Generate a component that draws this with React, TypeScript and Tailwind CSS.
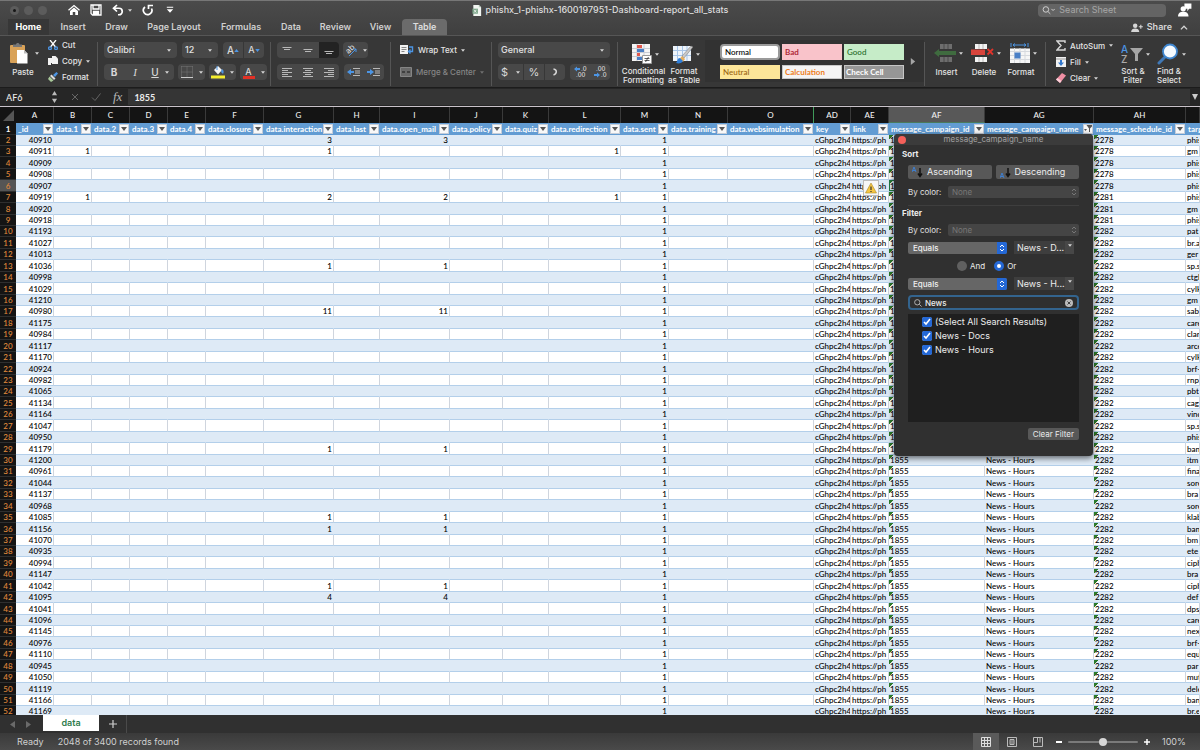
import { useState } from "react";
import type { ReactNode } from "react";

type Column = { letter: string; name: string; width: string; align?: "left" };

const columns: Column[] = [
  { letter: "A", name: "_id", width: "w-[38px]" },
  { letter: "B", name: "data.1", width: "w-[38px]" },
  { letter: "C", name: "data.2", width: "w-[38px]" },
  { letter: "D", name: "data.3", width: "w-[38px]" },
  { letter: "E", name: "data.4", width: "w-[38px]" },
  { letter: "F", name: "data.closure", width: "w-[58px]" },
  { letter: "G", name: "data.interaction", width: "w-[70px]" },
  { letter: "H", name: "data.last", width: "w-[46px]" },
  { letter: "I", name: "data.open_mail", width: "w-[70px]" },
  { letter: "J", name: "data.policy", width: "w-[53px]" },
  { letter: "K", name: "data.quiz", width: "w-[46px]" },
  { letter: "L", name: "data.redirection", width: "w-[72px]" },
  { letter: "M", name: "data.sent", width: "w-[48px]" },
  { letter: "N", name: "data.training", width: "w-[59px]" },
  { letter: "O", name: "data.websimulation", width: "w-[86px]" },
  { letter: "AD", name: "key", width: "w-[37px]", align: "left" },
  { letter: "AE", name: "link", width: "w-[38px]", align: "left" },
  { letter: "AF", name: "message_campaign_id", width: "w-[96px]", align: "left" },
  { letter: "AG", name: "message_campaign_name", width: "w-[109px]", align: "left" },
  { letter: "AH", name: "message_schedule_id", width: "w-[92px]", align: "left" },
  { letter: "", name: "target", width: "", align: "left" },
];

const ids =
  "40910 40911 40909 40908 40907 40919 40920 40918 41193 41027 41013 41036 40998 41029 41210 40980 41175 40984 41117 41170 40924 40982 41065 41134 41164 41047 40950 41179 41200 40961 41044 41137 40968 41085 41156 41070 40935 40994 41147 41042 41095 41041 41096 41145 40976 41110 40945 41050 41119 41166 41169".split(
    " ",
  );

const targets =
  "phis gm phis phis phis phis gm phis pat br.a ger sp.s ctgl cylk gm sab care clar arce cylk brf- rnp pbt cag vinc sp.s phis ban itm fina sore bra sore klab ban bm ete ciph bra ciph def dps care nex brf- equ par mut dele ban br.e".split(
    " ",
  );

const counts: Record<number, Record<string, number>> = {
  2: { G: 3, I: 3 },
  3: { B: 1, G: 1, L: 1 },
  7: { B: 1, G: 2, I: 2, L: 1 },
  13: { G: 1, I: 1 },
  17: { G: 11, I: 11 },
  29: { G: 1, I: 1 },
  35: { G: 1, I: 1 },
  36: { G: 1, I: 1 },
  41: { G: 1, I: 1 },
  42: { G: 4, I: 4 },
};

function cellValue(row: number, letter: string): string | number {
  if (letter === "A") return ids[row - 2];
  if (letter === "M") return 1;
  if (letter === "AD") return "cGhpc2h4I";
  if (letter === "AE") return "https://ph";
  if (letter === "AF") return "1855";
  if (letter === "AG") return "News - Hours";
  if (letter === "AH") return row < 7 ? "2278" : row < 10 ? "2281" : "2282";
  if (letter === "") return targets[row - 2];
  return counts[row]?.[letter] ?? "";
}

function Caret({ className = "text-[#d4d4d4]" }: { className?: string }) {
  return (
    <svg viewBox="0 0 6 4" aria-hidden="true" className={`h-[3px] w-1 shrink-0 ${className}`}>
      <path d="M0 0h6L3 4z" fill="currentColor" />
    </svg>
  );
}

function Divider() {
  return <div className="mt-0.5 h-[44px] w-px shrink-0 bg-[#555]" />;
}

function UpDown() {
  return (
    <svg viewBox="0 0 8 12" aria-hidden="true" className="h-2 w-1.5" fill="none" stroke="currentColor" strokeWidth="1.5">
      <path d="M1 4.5 4 1.5l3 3M1 7.5l3 3 3-3" />
    </svg>
  );
}

function TitleBar() {
  return (
    <div className="flex h-[19px] items-center border-t border-[#777] pr-2 pl-2.5">
      <div className="flex w-[58px] gap-[5px]">
        <span className="grid size-[9px] place-items-center rounded-full bg-[#5c5c5c]">
          <span className="size-[3px] rounded-full bg-[#161616]" />
        </span>
        <span className="size-[9px] rounded-full bg-[#5c5c5c]" />
        <span className="size-[9px] rounded-full bg-[#5c5c5c]" />
      </div>
      <div className="flex items-center text-white">
        <button type="button" aria-label="Home" className="mr-2.5">
          <svg viewBox="0 0 24 24" className="size-3" fill="none" stroke="currentColor" strokeWidth="2.6">
            <path d="M1 12.500 12 3l11 9.500" />
            <path d="M4 14v8h5.500v-6h5v6H20v-8l-8-7z" fill="currentColor" stroke="none" />
          </svg>
        </button>
        <button type="button" aria-label="Save" className="mr-2.5">
          <svg viewBox="0 0 24 24" className="size-3" fill="none" stroke="currentColor" strokeWidth="2.6">
            <path d="M2 2h20v20H5l-3-3z" />
            <path d="M6 2v8h12V2" />
            <path d="M7 22v-7h10v7" fill="currentColor" />
          </svg>
        </button>
        <button type="button" aria-label="Undo" className="mr-2.5 flex items-center gap-1">
          <svg viewBox="0 0 24 24" className="size-3" fill="none" stroke="currentColor" strokeWidth="3.4">
            <path d="M10 2 3 8.500 10 15M3 8.500h11a6.500 6.500 0 0 1 0 13h-2" />
          </svg>
          <Caret />
        </button>
        <button type="button" aria-label="Redo" className="mr-3">
          <svg viewBox="0 0 24 24" className="size-3" fill="none" stroke="currentColor" strokeWidth="3.4">
            <path d="M6 6a8.500 8.500 0 1 0 13 3M13 10V3h9" />
          </svg>
        </button>
        <button type="button" aria-label="Customize toolbar">
          <svg viewBox="0 0 10 10" className="size-2" fill="currentColor">
            <path d="M1 1h8v1.200H1zM1 4h8L5 8.500z" />
          </svg>
        </button>
      </div>
      <div className="flex flex-1 items-center justify-center gap-1 pr-3 text-[9px] font-medium text-[#dcdcdc]">
        <svg viewBox="0 0 20 24" aria-hidden="true" className="h-[11px] w-2.5">
          <path d="M2 0h12l5 5v19H2z" fill="#f1f5f1" />
          <path d="M14 0v5h5z" fill="#b7cdbd" />
          <path d="M0 8h12v11H0z" fill="#7da68a" />
          <path d="m3.500 10.500 5 6m0-6-5 6" stroke="#fff" strokeWidth="1.600" />
        </svg>
        <h1>phishx_1-phishx-1600197951-Dashboard-report_all_stats</h1>
      </div>
      <label className="flex h-[13px] w-32 items-center rounded-sm bg-[#646464] px-1 text-[#cfcfcf]">
        <svg viewBox="0 0 24 16" aria-hidden="true" className="h-2.5 w-[15px]" fill="none" stroke="currentColor" strokeWidth="1.800">
          <circle cx="7" cy="7" r="5" />
          <path d="m11 11 4 4M17 6l3 3 3-3" />
        </svg>
        <input
          type="search"
          aria-label="Search Sheet"
          placeholder="Search Sheet"
          className="w-full min-w-0 bg-transparent pl-1 text-[9px] outline-none placeholder:text-[#a6a6a6]"
        />
      </label>
      <button type="button" aria-label="Account" className="ml-3 text-white">
        <svg viewBox="0 0 24 24" className="size-3.5" fill="currentColor">
          <path d="M11 1h12v9h-4l-3 4v-4h-5z" />
          <circle cx="9" cy="10" r="4.500" />
          <path d="M0 23c0-6 4-8 9-8s9 2 9 8z" />
        </svg>
      </button>
    </div>
  );
}

const tabs = [
  { name: "Home", width: "w-[41px]" },
  { name: "Insert", width: "w-[48px]" },
  { name: "Draw", width: "w-[39px]" },
  { name: "Page Layout", width: "w-[76px]" },
  { name: "Formulas", width: "w-[58px]" },
  { name: "Data", width: "w-[42px]" },
  { name: "Review", width: "w-[47px]" },
  { name: "View", width: "w-[43px]" },
  { name: "Table", width: "w-[45px]" },
];

function RibbonTabs() {
  const [active, setActive] = useState("Home");
  return (
    <div className="flex h-[17px] items-stretch border-b border-[#565656] pr-3 pl-2">
      {tabs.map((tab) => (
        <button
          key={tab.name}
          type="button"
          onClick={() => setActive(tab.name)}
          className={`${tab.width} text-center text-[9px] leading-4 whitespace-nowrap ${
            tab.name === active
              ? "bg-[#373737] font-bold text-white"
              : tab.name === "Table"
                ? "rounded-t-sm bg-[#6b6b6b] font-semibold text-[#dedede]"
                : "font-semibold text-[#cfcfcf]"
          }`}
        >
          {tab.name}
        </button>
      ))}
      <button type="button" className="ml-auto flex items-center gap-1 text-[9px] font-semibold text-[#d6d6d6]">
        <svg viewBox="0 0 26 20" aria-hidden="true" className="h-[9px] w-3" fill="currentColor">
          <circle cx="9" cy="6" r="5" />
          <path d="M0 20c0-6 4-8 9-8s9 2 9 8zM17 7h9v2.500h-9zM20.200 4h2.500v9h-2.500z" />
        </svg>
        Share
      </button>
      <button type="button" aria-label="Collapse ribbon" className="ml-2 text-[#d6d6d6]">
        <svg viewBox="0 0 12 8" className="h-[5px] w-2" fill="none" stroke="currentColor" strokeWidth="2">
          <path d="m1 7 5-5 5 5" />
        </svg>
      </button>
    </div>
  );
}

const tool = "flex h-4 items-center justify-center bg-[#484848] text-[#d8d8d8]";

function Lines({ rows }: { rows: string }) {
  return (
    <svg viewBox="0 0 12 12" aria-hidden="true" className="size-3" fill="none" stroke="#b8b8b8">
      <path d={rows} />
    </svg>
  );
}

function DropField({ label, value, width }: { label: string; value: string; width: string }) {
  return (
    <div className={`flex h-4 items-center rounded-sm bg-[#484848] pr-1.5 ${width}`}>
      <select aria-label={label} className="min-w-0 flex-1 appearance-none bg-transparent pl-[3px] text-[9px] text-[#e2e2e2]">
        <option>{value}</option>
      </select>
      <Caret />
    </div>
  );
}

function BigButton({ label, width, children }: { label: ReactNode; width: string; children: ReactNode }) {
  return (
    <button type="button" className={`flex flex-col items-center text-[8px] leading-[9px] font-medium text-[#e4e4e4] ${width}`}>
      <span className="flex h-[26px] items-center gap-[3px] pl-1">
        {children}
        <Caret />
      </span>
      <span className="whitespace-nowrap">{label}</span>
    </button>
  );
}

function Indent({ dir }: { dir: string }) {
  return (
    <svg viewBox="0 0 14 12" aria-hidden="true" className="h-3 w-3.5" fill="none">
      <path d="M6 2.500h7M8 5h5M8 7h5M6 9.500h7" stroke="#b8b8b8" />
      <path d={dir} fill="#4c95e4" />
    </svg>
  );
}

function Ribbon() {
  return (
    <div className="flex h-[51px] items-start bg-[#373737] pt-1 whitespace-nowrap text-[8px] font-medium text-[#e4e4e4]">
      <button type="button" className="ml-2 flex w-[38px] flex-col items-start text-[8px] leading-[9px]">
        <span className="flex h-[26px] items-center gap-[7px] pl-0.5">
          <svg viewBox="0 0 18 22" aria-hidden="true" className="h-[22px] w-[18px]">
            <rect x="0" y="3" width="15" height="18" rx="1" fill="#d9a258" />
            <path d="M3 5V2.500h3C6 .5 9.500.5 9.500 2.500h2.500V5z" fill="#777" />
            <path d="M7 8h7l3.500 3.500V21.500H7z" fill="#fff" />
            <path d="M14 8v3.500h3.500z" fill="#bbb" />
          </svg>
          <Caret />
        </span>
        <span className="mt-0.5 w-[30px] text-center">Paste</span>
      </button>
      <div className="flex w-[51px] flex-col gap-[6px] pl-0.5 leading-[10px]">
        <button type="button" className="flex items-center gap-1">
          <svg viewBox="0 0 10 10" aria-hidden="true" className="size-2.5" fill="none" strokeWidth="1.300">
            <path d="M2 0 7.500 7M8 0 2.500 7" stroke="#fff" />
            <circle cx="2" cy="8.200" r="1.400" stroke="#4c95e4" />
            <circle cx="8" cy="8.200" r="1.400" stroke="#4c95e4" />
          </svg>
          Cut
        </button>
        <button type="button" className="flex items-center gap-1">
          <svg viewBox="0 0 10 10" aria-hidden="true" className="size-2.5" fill="#f2f2f2">
            <path d="M0 2h4v5H3v2H0z" />
            <path d="M4 0h3.500L10 2.500V8H4z" />
          </svg>
          Copy
          <Caret />
        </button>
        <button type="button" className="flex items-center gap-1">
          <svg viewBox="0 0 10 10" aria-hidden="true" className="size-2.5">
            <path d="m5 3 3.500-3L10 1.500 7 5z" fill="#4c95e4" />
            <path d="m3.500 2.500 4 4-1.500 1.500-4-4z" fill="#ddd" />
            <path d="m1.500 4.500 4 4L3 10 0 7z" fill="#a9c99a" />
          </svg>
          Format
        </button>
      </div>
      <Divider />

      <div className="ml-1.5 flex w-[166px] flex-col gap-[6px] pt-0.5">
        <div className="flex gap-[5px]">
          <DropField label="Font" value="Calibri" width="w-[73px]" />
          <DropField label="Font size" value="12" width="w-9" />
          <div className="flex gap-px">
            <button type="button" className={`${tool} w-5 rounded-l-sm text-[10px]`}>
              A
              <svg viewBox="0 0 6 4" aria-hidden="true" className="h-[3px] w-[5px]">
                <path d="M0 4h6L3 0z" fill="#4c95e4" />
              </svg>
            </button>
            <button type="button" className={`${tool} w-5 rounded-r-sm text-[9px]`}>
              A
              <svg viewBox="0 0 6 4" aria-hidden="true" className="h-[3px] w-[5px]">
                <path d="M0 0h6L3 4z" fill="#4c95e4" />
              </svg>
            </button>
          </div>
        </div>
        <div className="flex gap-1">
          <div className="flex rounded-sm">
            <button type="button" className={`${tool} w-5 rounded-l-sm text-[10px] font-bold`}>B</button>
            <button type="button" className={`${tool} w-[22px] font-['Liberation_Serif'] text-[11px] italic`}>I</button>
            <button type="button" className={`${tool} w-7 gap-1.5 rounded-r-sm text-[10px]`}>
              <span className="underline">U</span>
              <Caret />
            </button>
          </div>
          <button type="button" aria-label="Borders" className={`${tool} w-[27px] gap-1.5 rounded-sm`}>
            <svg viewBox="0 0 12 12" aria-hidden="true" className="size-3" fill="none">
              <path d="M.5.500v11M11.500.500v11M.5.500h11M.5 6h11M6 .5v11" stroke="#777" strokeDasharray="1 1" />
              <path d="M0 11.500h12" stroke="#ccc" />
            </svg>
            <Caret />
          </button>
          <button type="button" aria-label="Fill color" className={`${tool} w-[27px] gap-[5px] rounded-sm`}>
            <svg viewBox="0 0 14 14" aria-hidden="true" className="size-3.5">
              <path d="m3 5 4-4 4 4-4 4.500z" fill="#f4f4f4" />
              <path d="M11 4c2 1 2 3 1 5l-2-2z" fill="#4c95e4" />
              <path d="M6 1v4" stroke="#4c95e4" />
              <path d="M0 10.500h14v3H0z" fill="#f7ef2e" />
            </svg>
            <Caret />
          </button>
          <button type="button" aria-label="Font color" className={`${tool} w-[27px] gap-1.5 rounded-sm`}>
            <span className="flex flex-col items-center">
              <span className="h-2.5 text-[9px] leading-[11px]">A</span>
              <span className="h-[3px] w-3 bg-[#e23126]" />
            </span>
            <Caret />
          </button>
        </div>
      </div>
      <Divider />

      <div className="ml-1.5 flex w-[113px] flex-col gap-[6px] pt-0.5">
        <div className="flex gap-1">
          <div className="flex">
            <button type="button" aria-label="Align top" className={`${tool} w-5 rounded-l-sm`}>
              <Lines rows="M1.500 3.500h9M3 5.500h6" />
            </button>
            <button type="button" aria-label="Align middle" className={`${tool} w-[22px]`}>
              <Lines rows="M1.500 5.500h9M3 7.500h6" />
            </button>
            <button type="button" aria-label="Align bottom" className="flex h-4 w-5 items-center justify-center rounded-r-sm bg-[#232323] text-[#d8d8d8]">
              <Lines rows="M1.500 7.500h9M3 9.500h6" />
            </button>
          </div>
          <button type="button" aria-label="Orientation" className={`${tool} w-[25px] gap-1 rounded-sm`}>
            <svg viewBox="0 0 14 14" aria-hidden="true" className="size-3.5">
              <text x="1" y="9" fontSize="8" fill="#ddd" transform="rotate(-45 5 7)">ab</text>
              <path d="m4 13 7-7M11 9V6H8" stroke="#4c95e4" fill="none" />
            </svg>
            <Caret />
          </button>
        </div>
        <div className="flex gap-[5px]">
          <div className="flex">
            <button type="button" aria-label="Align left" className={`${tool} w-5 rounded-l-sm`}>
              <Lines rows="M1 2.500h10M1 4.500h6M1 6.500h10M1 8.500h6M1 10.500h10" />
            </button>
            <button type="button" aria-label="Center" className={`${tool} w-[22px]`}>
              <Lines rows="M1 2.500h10M3 4.500h6M1 6.500h10M3 8.500h6M1 10.500h10" />
            </button>
            <button type="button" aria-label="Align right" className={`${tool} w-5 rounded-r-sm`}>
              <Lines rows="M1 2.500h10M5 4.500h6M1 6.500h10M5 8.500h6M1 10.500h10" />
            </button>
          </div>
          <div className="flex">
            <button type="button" aria-label="Decrease indent" className={`${tool} w-5 rounded-l-sm`}>
              <Indent dir="M0 6l4-3v2h3v2H4v2z" />
            </button>
            <button type="button" aria-label="Increase indent" className={`${tool} w-5 rounded-r-sm`}>
              <Indent dir="M7 6L3 3v2H0v2h3v2z" />
            </button>
          </div>
        </div>
      </div>
      <Divider />

      <div className="ml-[9px] flex w-[91px] flex-col gap-[6px] pt-0.5">
        <button type="button" className="flex h-4 items-center gap-1">
          <svg viewBox="0 0 14 10" aria-hidden="true" className="h-2.5 w-3.5">
            <path d="M0 0h8v9H0z" fill="#f2f2f2" />
            <path d="M1.500 2.500h5M1.500 4.500h5M1.500 6.500h3" stroke="#888" />
            <path d="M9 2h3.500v4.500H9M10.500 4.500l-2 2 2 2" stroke="#4c95e4" strokeWidth="1.400" fill="none" />
          </svg>
          Wrap Text
          <Caret />
        </button>
        <button type="button" className="flex h-4 items-center gap-1 text-[#858585]">
          <svg viewBox="0 0 12 10" aria-hidden="true" className="h-2.5 w-3">
            <path d="M.5.500h11v9H.5z" fill="#6a6a6a" stroke="#858585" />
            <path d="M2 5h3M7 5h3" stroke="#333" strokeWidth="1.500" />
          </svg>
          Merge &amp; Center
          <Caret className="text-[#707070]" />
        </button>
      </div>
      <Divider />

      <div className="ml-1.5 flex w-[119px] flex-col gap-[6px] pt-0.5">
        <DropField label="Number format" value="General" width="w-28" />
        <div className="flex gap-[5px]">
          <div className="flex gap-px">
            <button type="button" className={`${tool} w-[25px] gap-2 rounded-l-sm text-[11px] font-normal`}>
              $
              <Caret />
            </button>
            <button type="button" className={`${tool} w-5 text-[11px] font-normal`}>%</button>
            <button type="button" aria-label="Comma style" className={`${tool} w-5 rounded-r-sm`}>
              <svg viewBox="0 0 6 8" aria-hidden="true" className="h-2 w-1.5">
                <path d="M1.500 1c4 .500 3.500 5 0 6" stroke="currentColor" strokeWidth="1.500" fill="none" />
              </svg>
            </button>
          </div>
          <div className="flex">
            <button type="button" aria-label="Increase decimal" className={`${tool} w-5 rounded-l-sm`}>
              <svg viewBox="0 0 14 14" aria-hidden="true" className="size-3.5" fontSize="6">
                <path d="M1 4l3-2.500v1.500h3v2H4v1.500z" fill="#4c95e4" />
                <text x="8" y="6" fill="#ddd">.0</text>
                <text x="3" y="12" fill="#ddd">.00</text>
              </svg>
            </button>
            <button type="button" aria-label="Decrease decimal" className={`${tool} w-5 rounded-r-sm`}>
              <svg viewBox="0 0 14 14" aria-hidden="true" className="size-3.5" fontSize="6">
                <text x="3" y="6" fill="#ddd">.00</text>
                <path d="M7 10L4 7.500v1.500H1v2h3v1.500z" fill="#4c95e4" />
                <text x="8" y="12" fill="#ddd">.0</text>
              </svg>
            </button>
          </div>
        </div>
      </div>
      <Divider />

      <div className="ml-1 flex gap-0.5 [&_button]:pt-px">
        <BigButton label={<>Conditional<br />Formatting</>} width="w-[43px]">
          <svg viewBox="0 0 20 20" aria-hidden="true" className="size-5">
            <path d="M0 0h18v17H0z" fill="#f5f5f5" />
            <path d="M0 4.500h18M0 8.500h18M0 12.500h18M5 0v17M12 0v17" stroke="#c9ccd4" />
            <path d="M5 1h5v3H5zM5 9h3v3H5z" fill="#e2574c" />
            <path d="M5 5h7v3H5zM5 13h6v3H5z" fill="#4a7fc6" />
            <path d="M10.500 11.500h9v8h-9z" fill="#fff" stroke="#999" />
            <path d="M12.500 14.500h5M12.500 16.500h5M16.500 13l-3 5" stroke="#333" strokeWidth=".8" />
          </svg>
        </BigButton>
        <BigButton label={<>Format<br />as Table</>} width="w-[34px]">
          <svg viewBox="0 0 20 20" aria-hidden="true" className="size-5">
            <path d="M0 2h18v15H0z" fill="#eef4fb" />
            <path d="M0 6.500h18M0 11.500h18M4.500 2v15M9.500 2v15M14 2v15" stroke="#a7c5e8" />
            <path d="M20 3 11 14l-2-2L18 2z" fill="#c9c9c9" stroke="#777" strokeWidth=".5" />
            <path d="m9 12 3 3-2 3-4-2z" fill="#e7ae5c" />
            <path d="M7 14c-3 0-2 3-4 5 3 1 6 0 7-2z" fill="#2f7ed8" />
          </svg>
        </BigButton>
      </div>

      <div className="ml-1 flex h-[42px] items-center bg-[#323232] pl-[15px]">
        <div className="grid grid-cols-3 gap-x-0.5 gap-y-[5px] font-['Lato'] text-[8px] leading-[10px]">
          <button type="button" className="h-4 w-[60px] rounded-sm border-2 border-[#9a9a9a] bg-white pl-[3px] text-left text-black">Normal</button>
          <button type="button" className="h-4 w-[60px] bg-[#f9c3ca] pl-[3px] text-left font-bold text-[#b02a38]">Bad</button>
          <button type="button" className="h-4 w-[60px] bg-[#c6ecc8] pl-[3px] text-left text-[#1e6a26]">Good</button>
          <button type="button" className="h-3.5 w-[60px] bg-[#fde699] pl-[3px] text-left text-[#9a6410]">Neutral</button>
          <button type="button" className="h-3.5 w-[60px] border border-[#c9c9c9] bg-[#f4f4f4] pl-0.5 text-left font-bold text-[#ef7d22]">Calculation</button>
          <button type="button" className="h-3.5 w-[60px] border border-[#c6c6c6] bg-[#969696] pl-px text-left font-bold text-white">Check Cell</button>
        </div>
        <button type="button" aria-label="More styles" className="ml-1.5 w-3.5">
          <svg viewBox="0 0 5 8" className="h-[7px] w-1.5" fill="#a5a5a5">
            <path d="M0 0v8l5-4z" />
          </svg>
        </button>
      </div>
      <Divider />

      <div className="ml-[3px] flex w-[117px] [&_button]:leading-[13px]">
        <BigButton label="Insert" width="w-[37px]">
          <svg viewBox="0 0 22 20" aria-hidden="true" className="h-5 w-[22px]">
            <path d="M6 1h12v5H6zM6 14h12v5H6z" fill="#6e6e6e" />
            <path d="M10 1v5M14 1v5M10 14v5M14 14v5" stroke="#4a4a4a" />
            <path d="M0 10l5-4v2h17v4H5v2z" fill="#3f6b3f" />
          </svg>
        </BigButton>
        <BigButton label="Delete" width="w-[38px]">
          <svg viewBox="0 0 23 20" aria-hidden="true" className="h-5 w-[23px]">
            <path d="M4 1h12v5H4zM4 14h12v5H4z" fill="#f3f3f3" />
            <path d="M8 1v5M12 1v5M8 14v5M12 14v5" stroke="#b9b9b9" />
            <path d="M0 6.500h14V12H0z" fill="#d8443c" />
            <path d="m16.500 6 5.500 5.500m0-5.500-5.500 5.500" stroke="#e0332b" strokeWidth="1.800" />
          </svg>
        </BigButton>
        <BigButton label="Format" width="w-[36px]">
          <svg viewBox="0 0 20 20" aria-hidden="true" className="size-5">
            <path d="M0 5.500h20V20H0z" fill="#f6f6f6" />
            <path d="M0 8.500h20M0 12.500h20M0 16.500h20M4.500 5v15M10 5v15M15 5v15" stroke="#d6d9de" />
            <path d="M4.500 9.500h6v6h-6z" fill="#4a7fc6" />
            <path d="M1 0v4M18 0v4M3 2h13M5 .5 3 2l2 1.500M14 .5 16 2l-2 1.500" stroke="#4c95e4" fill="none" />
          </svg>
        </BigButton>
      </div>
      <Divider />

      <div className="ml-2.5 flex w-[61px] flex-col gap-[6px] leading-[10px]">
        <button type="button" className="flex items-center gap-1">
          <svg viewBox="0 0 10 11" aria-hidden="true" className="h-[11px] w-2.5" fill="none" stroke="#d8d8d8" strokeWidth="1.400">
            <path d="M9 3V1H1l4 4.500L1 10h8V8" />
          </svg>
          AutoSum
          <Caret />
        </button>
        <button type="button" className="flex items-center gap-1">
          <svg viewBox="0 0 10 10" aria-hidden="true" className="size-2.5">
            <path d="M0 0h10v10H0z" fill="#f1f1f1" />
            <path d="M0 2h10" stroke="#999" />
            <path d="M4 3h2v2.500h2L5 9 2 5.500h2z" fill="#3277cc" />
          </svg>
          Fill
          <Caret />
        </button>
        <button type="button" className="flex items-center gap-1">
          <svg viewBox="0 0 10 10" aria-hidden="true" className="size-2.5">
            <path d="M0 6.500 6 0l4 2.500L4 10z" fill="#f08fa4" />
            <path d="M0 6.500 1.500 5l4 3L4 10z" fill="#fbd0d8" />
          </svg>
          Clear
          <Caret />
        </button>
      </div>
      <div className="flex [&_button]:pt-px">
        <BigButton label={<>Sort &amp;<br />Filter</>} width="w-8">
          <svg viewBox="0 0 22 20" aria-hidden="true" className="h-5 w-[22px]">
            <text x="0" y="9" fontSize="10" fill="#4c95e4">A</text>
            <text x="0" y="19" fontSize="10" fill="#aaa">Z</text>
            <path d="M9 4h13l-5 6v7h-3v-7z" fill="#a5a5a5" />
          </svg>
        </BigButton>
        <BigButton label={<>Find &amp;<br />Select</>} width="w-10">
          <svg viewBox="0 0 22 22" aria-hidden="true" className="size-[22px]">
            <path d="m2 20 6-6" stroke="#3f77b5" strokeWidth="3" strokeLinecap="round" />
            <circle cx="13" cy="8.500" r="7" fill="#f5faff" stroke="#3f86cf" strokeWidth="1.800" />
          </svg>
        </BigButton>
      </div>
    </div>
  );
}

function FormulaBar() {
  return (
    <div className="flex h-[20px] items-center border-t border-b border-t-[#1c1c1c] border-b-[#c9c2c9] bg-[#262626] text-[9px] text-[#ececec]">
      <input aria-label="Name box" defaultValue="AF6" className="h-4 w-[50px] bg-transparent pl-1.5 font-['Lato'] font-medium outline-none" />
      <svg viewBox="0 0 6 14" aria-hidden="true" className="h-3 w-[9px]" fill="#bbb">
        <path d="M0 5h6L3 0zM0 9h6l-3 5z" />
      </svg>
      <button type="button" aria-label="Cancel" className="ml-3 text-[#666]">
        <svg viewBox="0 0 8 8" className="size-2" fill="none" stroke="currentColor">
          <path d="m1 1 6 6m0-6-6 6" />
        </svg>
      </button>
      <button type="button" aria-label="Enter" className="ml-3 text-[#666]">
        <svg viewBox="0 0 10 8" className="h-2 w-2.5" fill="none" stroke="currentColor">
          <path d="m1 4.500 3 3L9.500.500" />
        </svg>
      </button>
      <span className="ml-3 font-['Liberation_Serif'] text-[13px] leading-4 text-[#b5b5b5] italic">fx</span>
      <input aria-label="Formula" defaultValue="1855" className="ml-1.5 h-4 min-w-0 flex-1 bg-[#353535] pl-1.5 font-['Lato'] font-bold outline-none" />
      <button type="button" aria-label="Expand formula bar" className="grid w-2.5 place-items-center">
        <svg viewBox="0 0 6 6" className="size-1.5" fill="#ccc">
          <path d="M0 0h6L3 6z" />
        </svg>
      </button>
    </div>
  );
}

function HeaderFilter({ name }: { name: string }) {
  return (
    <button type="button" aria-label={`Filter ${name}`} className="mr-px grid h-2.5 w-2.5 shrink-0 place-items-center border border-[#c5cdd8] bg-[#f8f8f8] text-[#555]">
      {name === "message_campaign_name" ? (
        <svg viewBox="0 0 8 8" className="size-2" fill="currentColor">
          <path d="M2.500 0H8v1.500L6 3.500V7H5V3.500zM0 4h3L1.500 6z" />
        </svg>
      ) : (
        <svg viewBox="0 0 6 4" className="h-1 w-1.5" fill="currentColor">
          <path d="M0 0h6L3 4z" />
        </svg>
      )}
    </button>
  );
}

function SheetTable() {
  return (
    <table className="w-full table-fixed border-separate border-spacing-0 font-['Lato'] text-[8px] leading-[10px] text-black">
      <colgroup>
        <col className="w-4" />
        {columns.map((col) => (
          <col key={col.name} className={col.width} />
        ))}
      </colgroup>
      <thead>
        <tr className="h-4 bg-[#141414] text-[#f0f0f0]">
          <th scope="col" className="h-4 p-0">
            <svg viewBox="0 0 16 16" aria-label="Select all" className="size-4">
              <path d="M14 3v11H3z" fill="#555" />
            </svg>
          </th>
          {columns.map((col) => (
            <th
              key={col.name}
              scope="col"
              className={`h-4 border-r p-0 font-medium ${col.letter === "O" ? "border-r-[#3f9a5a]" : "border-r-[#3a3a3a]"} ${
                col.letter === "AF" ? "border-b border-b-[#4a7a5c] bg-[#585858]" : ""
              }`}
            >
              {col.letter}
            </th>
          ))}
        </tr>
        <tr className="h-3 bg-[#629cd3] text-white">
          <th scope="row" className="h-3 border-b border-[#2a2a2a] bg-[#141414] p-0">1</th>
          {columns.map((col) => (
            <th key={col.name} scope="col" className="h-3 overflow-hidden p-0 text-left">
              <span className="flex items-center">
                <span className="min-w-0 flex-1 overflow-hidden pl-0.5 whitespace-nowrap">{col.name}</span>
                {col.letter && <HeaderFilter name={col.name} />}
              </span>
            </th>
          ))}
        </tr>
      </thead>
      <tbody>
        {ids.map((id, index) => {
          const row = index + 2;
          const band = row % 2 === 0;
          const height = index % 7 === 2 || index % 7 === 4 || index % 7 === 6 ? "h-3" : "h-[11px]";
          return (
            <tr key={id} className={`${height} ${band ? "bg-[#deeaf6]" : "bg-white"}`}>
              <th
                scope="row"
                className={`border-b border-[#2f2f2f] p-0 font-medium text-[#e08a3c] ${row === 6 ? "bg-[#555]" : "bg-[#141414]"}`}
              >
                {row}
              </th>
              {columns.map((col) => {
                const flagged = col.letter === "AF" || col.letter === "AH";
                const selected = row === 6 && col.letter === "AF";
                return (
                  <td
                    key={col.name}
                    className={`overflow-hidden border-r border-b border-b-[#b3cfea] p-0 font-medium whitespace-nowrap ${
                      band ? "border-r-[#deeaf6]" : "border-r-[#cfd5de]"
                    } ${col.align === "left" ? "pl-px" : "pr-px text-right"} ${
                      flagged ? "bg-[linear-gradient(135deg,#2b7a2b_3px,transparent_3px)]" : ""
                    } ${selected ? "shadow-[inset_0_0_0_1px_#1f7a45]" : ""}`}
                  >
                    {cellValue(row, col.letter)}
                  </td>
                );
              })}
            </tr>
          );
        })}
      </tbody>
    </table>
  );
}

function ColorRow({ id }: { id: string }) {
  return (
    <div className="flex items-center pl-3.5">
      <label htmlFor={id} className="w-10 text-[8px] whitespace-nowrap text-[#e0e0e0]">By color:</label>
      <div className="flex h-3 flex-1 items-center rounded-xs bg-[#454545] pr-0.5 text-[#777]">
        <select id={id} disabled className="min-w-0 flex-1 appearance-none bg-transparent pl-1 text-[8px]">
          <option>None</option>
        </select>
        <UpDown />
      </div>
    </div>
  );
}

function ConditionRow({ name, value }: { name: string; value: string }) {
  return (
    <div className="flex items-center pl-3.5">
      <div className="flex h-3 w-[99px] items-center overflow-hidden rounded-xs bg-[#666] text-white">
        <select aria-label={`${name} operator`} className="min-w-0 flex-1 appearance-none bg-transparent pl-[5px] text-[8px] font-medium text-[#f0f0f0]">
          <option>Equals</option>
        </select>
        <span className="grid h-3 w-2.5 place-items-center bg-[#2468d6]">
          <UpDown />
        </span>
      </div>
      <button type="button" className="ml-[7px] flex h-[13px] w-[60px] justify-between bg-[#3e3e3e] pl-[3px] text-[9px] leading-[14px] text-[#ececec]">
        {value}
        <span className="flex h-[13px] w-[9px] justify-center bg-[#474747] pt-[3px]">
          <Caret />
        </span>
      </button>
    </div>
  );
}

function FilterPanel() {
  const [query, setQuery] = useState("News");
  const options = ["(Select All Search Results)", "News - Docs", "News - Hours"];
  return (
    <aside
      aria-label="Column filter"
      className="absolute top-[27px] left-[894px] w-[199px] rounded-sm bg-[#303030] pb-4 text-[#ececec] shadow-[0_2px_6px_rgba(0,0,0,0.6)]"
    >
      <div className="flex h-[11px] items-center rounded-t-sm bg-[#3b3b3b] pl-1">
        <button type="button" aria-label="Close" className="size-2 rounded-full bg-[#f4605a]" />
        <h2 className="flex-1 pr-3 text-center text-[8px] leading-[11px] text-[#a2a2a2]">message_campaign_name</h2>
      </div>
      <div className="pr-3.5">
        <h3 className="pt-1 pl-2 text-[8px] leading-[11px] font-bold">Sort</h3>
        <div className="mt-[5px] flex gap-1 pl-3.5">
          <button type="button" className="flex h-3.5 flex-1 items-center rounded-xs bg-[#585858] pl-1 text-[9px]">
            <svg viewBox="0 0 14 12" aria-hidden="true" className="mr-px h-3 w-3.5">
              <path d="m0 6 2-5 2 5M1 4.500h2" stroke="#3f7fd0" fill="none" />
              <path d="M8 2v8M6 7.500l2 3 2-3" stroke="#111" strokeWidth="1.500" fill="none" />
            </svg>
            Ascending
          </button>
          <button type="button" className="flex h-3.5 flex-1 items-center rounded-xs bg-[#585858] pl-1 text-[9px]">
            <svg viewBox="0 0 14 12" aria-hidden="true" className="mr-px h-3 w-3.5">
              <path d="m0 12 2-5 2 5M1 10.500h2" stroke="#3f7fd0" fill="none" />
              <path d="M8 2v8M6 7.500l2 3 2-3" stroke="#111" strokeWidth="1.500" fill="none" />
            </svg>
            Descending
          </button>
        </div>
        <div className="mt-[7px]">
          <ColorRow id="sort-color" />
        </div>
        <hr className="mt-[7px] ml-3.5 border-[#3e3e3e]" />
        <h3 className="mt-0.5 pl-2 text-[8px] leading-[11px] font-bold">Filter</h3>
        <div className="mt-[5px]">
          <ColorRow id="filter-color" />
        </div>
        <div className="mt-[5px]">
          <ConditionRow name="First" value="News - D..." />
        </div>
        <div className="mt-[5px] mb-1 flex items-center gap-[9px] pl-[63px] text-[8px] leading-[14px]">
          <label className="flex items-center gap-[3px]">
            <input type="radio" name="join" className="size-2.5 appearance-none rounded-full bg-[#606060] checked:border-[3px] checked:border-[#2468d6] checked:bg-white" />
            And
          </label>
          <label className="flex items-center gap-[3px]">
            <input type="radio" name="join" defaultChecked className="size-2.5 appearance-none rounded-full bg-[#606060] checked:border-[3px] checked:border-[#2468d6] checked:bg-white" />
            Or
          </label>
        </div>
        <ConditionRow name="Second" value="News - H..." />
        <div className="mt-[5px] ml-3.5 flex h-[15px] items-center rounded-sm border-2 border-[#33648e] bg-[#2f2f2f] px-1">
          <svg viewBox="0 0 9 9" aria-hidden="true" className="size-2" fill="none" stroke="#bbb">
            <circle cx="3.700" cy="3.700" r="3" />
            <path d="m6 6 2.500 2.500" />
          </svg>
          <input
            aria-label="Search"
            value={query}
            onChange={(event) => setQuery(event.target.value)}
            className="ml-[3px] min-w-0 flex-1 bg-transparent text-[8px] font-medium outline-none"
          />
          <button type="button" aria-label="Clear search">
            <svg viewBox="0 0 9 9" className="size-2">
              <circle cx="4.500" cy="4.500" r="4.500" fill="#bbb" />
              <path d="m2.800 2.800 3.400 3.400m0-3.400L2.800 6.200" stroke="#2f2f2f" />
            </svg>
          </button>
        </div>
        <ul className="mt-1 ml-3.5 h-[108px] bg-[#1f1f1f] pt-px pl-3.5 text-[9px] leading-[14px]">
          {options.map((option) => (
            <li key={option}>
              <label className="flex h-3.5 items-center gap-[3px]">
                <input type="checkbox" defaultChecked className="size-2.5 accent-[#2468d6]" />
                {option}
              </label>
            </li>
          ))}
        </ul>
        <button type="button" className="mt-1.5 ml-auto block h-3 rounded-xs bg-[#585858] px-[5px] text-[8px] leading-3">
          Clear Filter
        </button>
      </div>
    </aside>
  );
}

function SheetTabs() {
  return (
    <div className="flex h-[18px] items-start bg-[#303030]">
      <div className="flex w-[43px] items-center gap-[11px] pt-1.5 pl-2.5">
        <svg viewBox="0 0 5 7" aria-hidden="true" className="h-[7px] w-[5px]" fill="#6a6a6a">
          <path d="M5 0v7L0 3.500z" />
        </svg>
        <svg viewBox="0 0 5 7" aria-hidden="true" className="h-[7px] w-[5px]" fill="#6a6a6a">
          <path d="M0 0v7l5-3.500z" />
        </svg>
      </div>
      <button type="button" className="h-4 w-14 bg-white text-[9px] font-semibold text-[#2f7d4c]">data</button>
      <button type="button" aria-label="New sheet" className="grid h-[18px] w-7 place-items-center border-r border-[#4a4a4a] text-[#cfcfcf]">
        <svg viewBox="0 0 8 8" className="size-2" stroke="currentColor" strokeWidth="1.200">
          <path d="M4 0v8M0 4h8" />
        </svg>
      </button>
    </div>
  );
}

function StatusBar() {
  return (
    <div className="flex h-[17px] items-center bg-linear-to-b from-[#3a3a3a] to-[#4a4a4a] text-[9px] text-[#d0d0d0]">
      <span className="pl-[17px]">Ready</span>
      <span className="flex-1 pl-3.5">2048 of 3400 records found</span>
      <button type="button" aria-label="Normal view" className="grid h-[17px] w-[26px] place-items-center bg-[#5a5a5a]">
        <svg viewBox="0 0 10 10" className="size-2.5" fill="none" stroke="#ddd">
          <path d="M.5.500h9v9h-9zM.5 3.500h9M.5 6.500h9M3.500.500v9M6.500.500v9" />
        </svg>
      </button>
      <button type="button" aria-label="Page layout view" className="grid w-[26px] place-items-center">
        <svg viewBox="0 0 10 10" className="size-2.5" fill="none" stroke="#bbb">
          <path d="M.5.500h9v9h-9zM3 2.500h4v5H3zM3.500 4h3M3.500 6h3" />
        </svg>
      </button>
      <button type="button" aria-label="Page break view" className="grid w-[25px] place-items-center">
        <svg viewBox="0 0 10 10" className="size-2.5" fill="none" stroke="#bbb">
          <path d="M.5.500h9v9h-9zM4.500.500v5h-4M7 .5v5" />
        </svg>
      </button>
      <button type="button" aria-label="Zoom out" className="mx-1.5 h-0.5 w-1.5 bg-white" />
      <input
        type="range"
        aria-label="Zoom"
        defaultValue={50}
        className="h-0.5 w-[70px] appearance-none rounded-full bg-[#7a7a7a] [&::-webkit-slider-thumb]:size-2 [&::-webkit-slider-thumb]:appearance-none [&::-webkit-slider-thumb]:rounded-full [&::-webkit-slider-thumb]:bg-[#d6d6d6]"
      />
      <button type="button" aria-label="Zoom in" className="ml-1.5 text-white">
        <svg viewBox="0 0 6 6" className="size-1.5" stroke="currentColor" strokeWidth="1.500">
          <path d="M3 0v6M0 3h6" />
        </svg>
      </button>
      <span className="w-[50px] pl-3">100%</span>
    </div>
  );
}

export default function App() {
  return (
    <div className="flex h-screen flex-col overflow-hidden bg-[#303030] font-['Inter',sans-serif]">
      <header className="shrink-0">
        <div className="bg-linear-to-b from-[#4b4b4b] to-[#3f3f3f]">
          <TitleBar />
          <RibbonTabs />
        </div>
        <Ribbon />
        <FormulaBar />
      </header>
      <main className="relative min-h-0 flex-1 overflow-hidden">
        <SheetTable />
        <div role="img" aria-label="Number stored as text" className="absolute top-[73px] left-[863px] grid size-4 place-items-center border border-[#bbb] bg-[#f7f7f7]">
          <svg viewBox="0 0 12 12" className="size-3">
            <path d="M6 1 11.500 11H.5z" fill="#f5c542" stroke="#a98a2a" strokeWidth=".6" />
            <path d="M6 4.500v3.500M6 9v1" stroke="#333" strokeWidth="1.200" />
          </svg>
        </div>
        <FilterPanel />
      </main>
      <footer className="shrink-0">
        <SheetTabs />
        <StatusBar />
      </footer>
    </div>
  );
}
